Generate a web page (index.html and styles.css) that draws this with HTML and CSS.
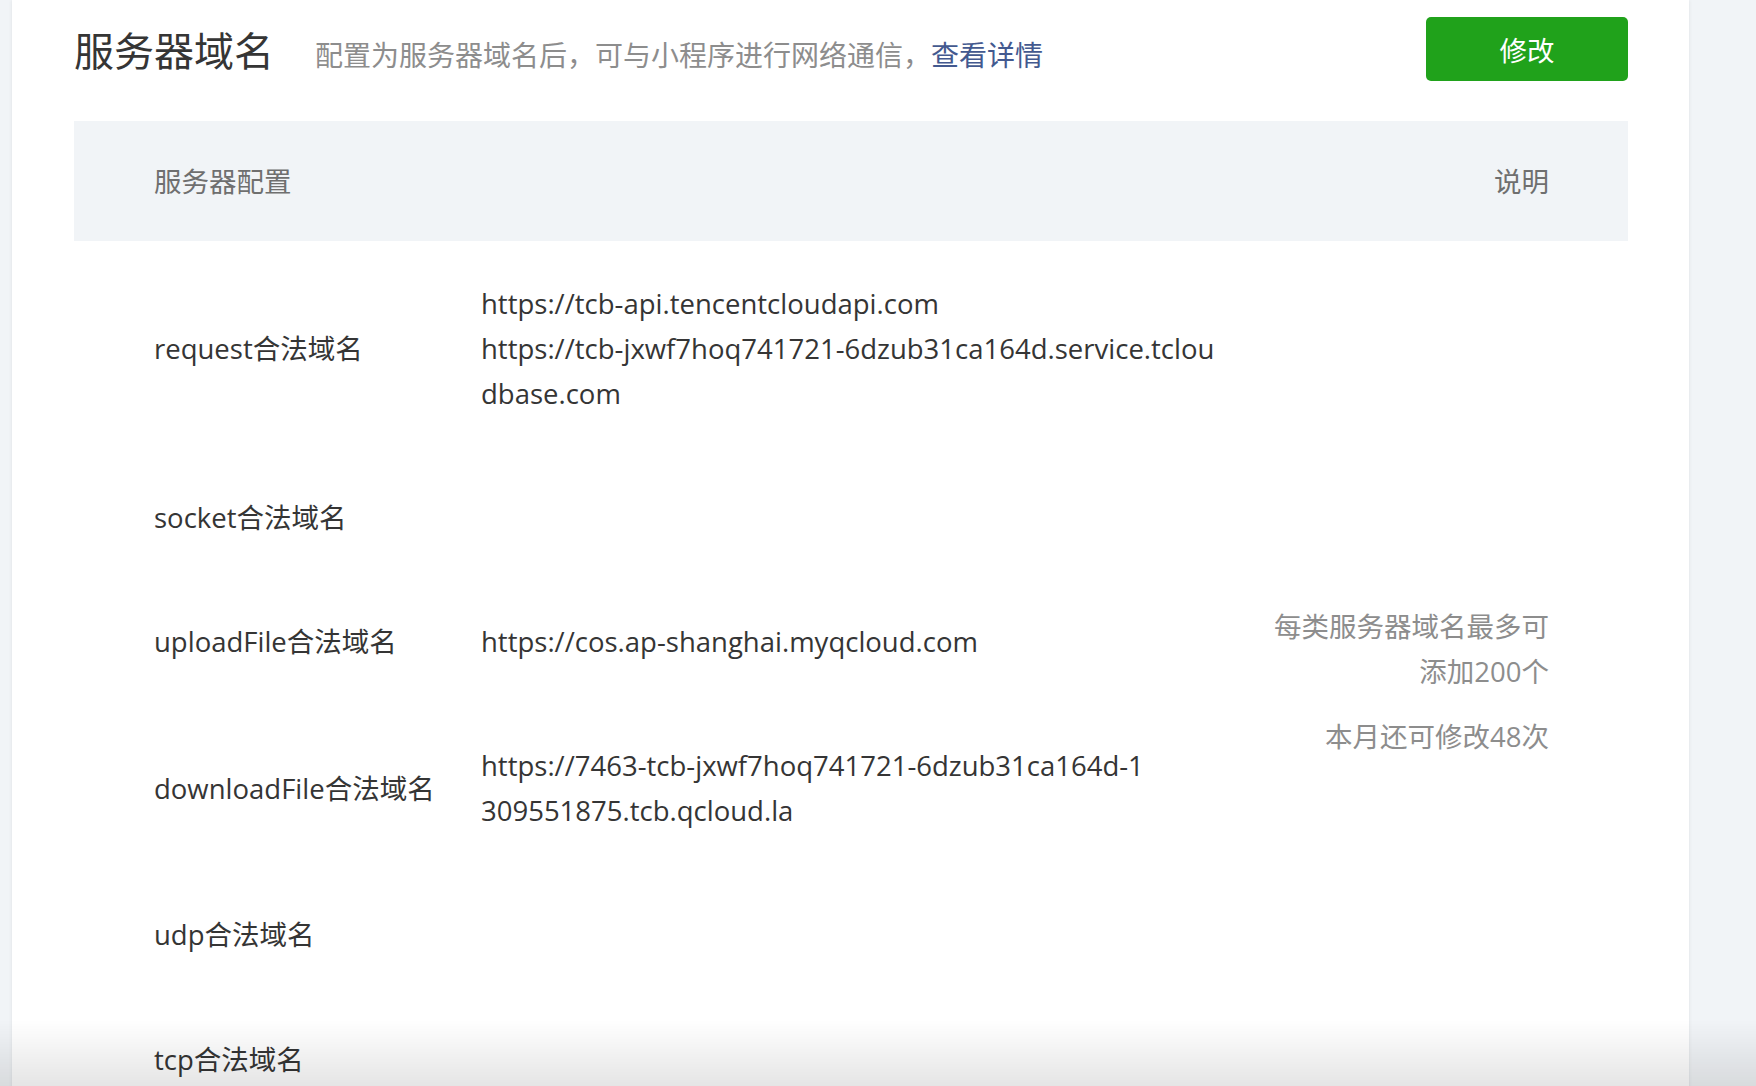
FILE: index.html
```
<!DOCTYPE html>
<html lang="zh-CN">
<head>
    <meta charset="UTF-8">
    <meta name="viewport" content="width=device-width, initial-scale=1.0">
    <title>服务器域名</title>
    <link rel="stylesheet" href="styles.css">
</head>
<body>
    <div class="page">
        <div class="card">
            <div class="card-head">
                <div class="title-wrap">
                    <h2 class="title">服务器域名</h2>
                    <span class="intro">配置为服务器域名后，可与小程序进行网络通信，<a href="#" class="link">查看详情</a></span>
                </div>
                <button class="btn-primary">修改</button>
            </div>

            <table class="domain-table">
                <colgroup>
                    <col class="col-label">
                    <col class="col-value">
                    <col class="col-note">
                </colgroup>
                <thead>
                    <tr>
                        <th colspan="2" class="th-left">服务器配置</th>
                        <th class="th-right">说明</th>
                    </tr>
                </thead>
                <tbody>
                    <tr>
                        <td class="label">request合法域名</td>
                        <td class="value">
                            <div>https://tcb-api.tencentcloudapi.com</div>
                            <div>https://tcb-jxwf7hoq741721-6dzub31ca164d.service.tclou</div>
                            <div>dbase.com</div>
                        </td>
                        <td class="note" rowspan="6">
                            <p>每类服务器域名最多可添加200个</p>
                            <p>本月还可修改48次</p>
                        </td>
                    </tr>
                    <tr>
                        <td class="label">socket合法域名</td>
                        <td class="value"></td>
                    </tr>
                    <tr>
                        <td class="label">uploadFile合法域名</td>
                        <td class="value">
                            <div>https://cos.ap-shanghai.myqcloud.com</div>
                        </td>
                    </tr>
                    <tr>
                        <td class="label">downloadFile合法域名</td>
                        <td class="value">
                            <div>https://7463-tcb-jxwf7hoq741721-6dzub31ca164d-1</div>
                            <div>309551875.tcb.qcloud.la</div>
                        </td>
                    </tr>
                    <tr>
                        <td class="label">udp合法域名</td>
                        <td class="value"></td>
                    </tr>
                    <tr>
                        <td class="label">tcp合法域名</td>
                        <td class="value"></td>
                    </tr>
                </tbody>
            </table>
        </div>
    </div>
    <div class="bottom-fade"></div>
</body>
</html>
```

FILE: styles.css
```
html, body {
    height: 100%;
}
body {
    margin: 0;
    background-color: #f1f4f7;
    font-family: "Open Sans", "Noto Sans CJK SC", sans-serif;
    color: #353535;
    overflow: hidden;
}
.page {
    padding: 0 67px 0 12px;
}
.card {
    background: white;
    min-height: 1200px;
    padding: 17px 61px 0 62px;
    box-shadow: 0 0 4px rgba(0,0,0,0.08);
}
.card-head {
    display: flex;
    align-items: center;
    justify-content: space-between;
    height: 64px;
}
.title-wrap {
    display: flex;
    align-items: baseline;
}
.title {
    margin: 0;
    font-size: 40px;
    font-weight: normal;
    color: #353535;
}
.intro {
    margin-left: 41px;
    font-size: 28px;
    color: #8d8d8d;
}
.link {
    color: #43598f;
    text-decoration: none;
}
.btn-primary {
    width: 202px;
    height: 64px;
    border: none;
    border-radius: 5px;
    background-color: #20a21b;
    color: white;
    font-family: inherit;
    font-size: 27.5px;
    cursor: pointer;
}
.domain-table {
    width: 100%;
    margin-top: 40px;
    border-collapse: collapse;
    table-layout: fixed;
    font-size: 27.5px;
}
.col-label {
    width: 407px;
}
.col-note {
    width: 369px;
}
.domain-table th {
    background-color: #f1f4f7;
    font-weight: normal;
    color: #6f6f6f;
    line-height: 45px;
    padding: 37.5px 0;
}
.th-left {
    text-align: left;
    padding-left: 80px !important;
}
.th-right {
    text-align: right;
    padding-right: 79px !important;
}
.domain-table td {
    padding: 39.6px 0;
    line-height: 45px;
    vertical-align: middle;
}
.label {
    padding-left: 80px !important;
}
.value div {
    white-space: nowrap;
}
.note {
    text-align: right;
    padding-right: 79px !important;
    color: #8d8d8d;
}
.note p {
    margin: 0;
}
.note p + p {
    margin-top: 20px;
}
.bottom-fade {
    position: fixed;
    left: 0;
    right: 0;
    bottom: 0;
    height: 66px;
    background: linear-gradient(rgba(0,0,0,0), rgba(0,0,0,0.1));
    pointer-events: none;
}
```
